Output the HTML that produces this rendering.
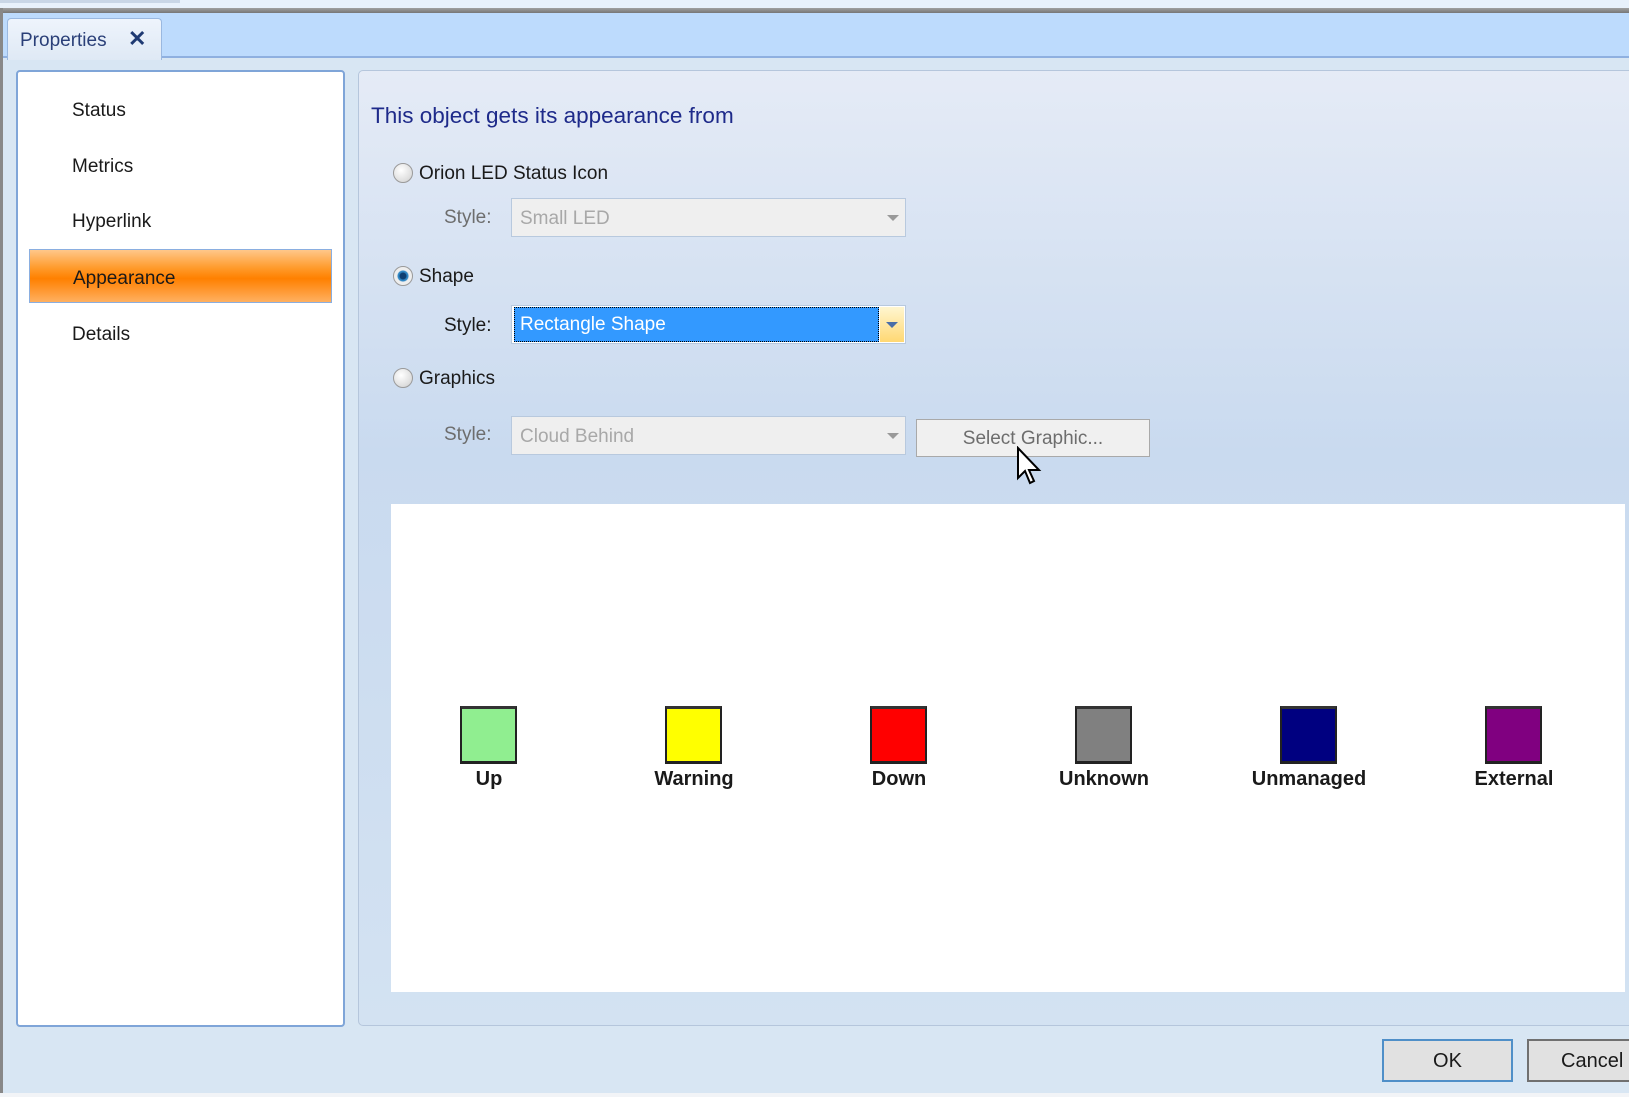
<!DOCTYPE html>
<html><head><meta charset="utf-8"><style>
*{margin:0;padding:0;box-sizing:border-box}
body{width:1629px;height:1097px;overflow:hidden;background:#d8e6f3;font-family:"Liberation Sans",sans-serif;position:relative;color:#1a1a1a}
.a{position:absolute}
.t{font-size:19px;white-space:nowrap;line-height:1}
.radio{width:20px;height:20px;border-radius:50%;border:1px solid #9a9a9a;background:radial-gradient(circle at 40% 35%,#fff,#ddd 70%,#bbb)}
.combo{border:1px solid #b8c9de;background:#efefef}
.combo .arr{position:absolute;right:6px;top:50%;margin-top:-3px;border-left:6px solid transparent;border-right:6px solid transparent;border-top:6px solid #999}
.sq{width:57px;height:58px;border:2px solid #222;border-top:3px solid #333;border-bottom:3px solid #222}
.lb{font-weight:bold;font-size:20px;width:160px;text-align:center;top:768px}
</style></head><body>
<div class="a" style="left:0;top:0;width:1629px;height:8px;background:#e8f1fb"></div>
<div class="a" style="left:0;top:0;width:180px;height:3px;background:#c9d6e6"></div>
<div class="a" style="left:0;top:8px;width:1629px;height:5px;background:linear-gradient(#a0a0a0,#777)"></div>
<div class="a" style="left:0;top:13px;width:1629px;height:45px;background:#bddbfd;border-bottom:2px solid #8fb0e0"></div>
<div class="a" style="left:0;top:8px;width:3px;height:1085px;background:#888"></div>
<div class="a" style="left:7px;top:18px;width:155px;height:42px;background:linear-gradient(#eef4fc,#dfe9f5);border:1px solid #9ab8e0;border-bottom:none;border-radius:4px 4px 0 0"></div>
<div class="a t" style="left:20px;top:31px;color:#2a3f78;font-size:19px">Properties</div>
<div class="a" style="left:128px;top:26px;font-size:22px;font-weight:bold;color:#1f3a73">✕</div>
<div class="a" style="left:16px;top:70px;width:329px;height:957px;background:#fff;border:2px solid #7fa5d8;border-radius:4px"></div>
<div class="a t" style="left:72px;top:101px">Status</div>
<div class="a t" style="left:72px;top:157px">Metrics</div>
<div class="a t" style="left:72px;top:212px">Hyperlink</div>
<div class="a" style="left:29px;top:249px;width:303px;height:54px;border:1px solid #8aaee0;background:linear-gradient(#ffc78a,#ff9a2a 35%,#ff8000 55%,#ffb060)"></div>
<div class="a t" style="left:73px;top:269px">Appearance</div>
<div class="a t" style="left:72px;top:325px">Details</div>
<div class="a" style="left:358px;top:70px;width:1280px;height:956px;border:1px solid #b5c6dc;border-radius:5px;background:linear-gradient(#e5ebf6,#c9daef 40%,#d3e2f2)"></div>
<div class="a t" style="left:371px;top:105px;font-size:22.5px;color:#1e2a8a">This object gets its appearance from</div>
<div class="a radio" style="left:393px;top:163px"></div>
<div class="a t" style="left:419px;top:164px">Orion LED Status Icon</div>
<div class="a t" style="left:444px;top:208px;color:#6d6d6d">Style:</div>
<div class="a combo" style="left:511px;top:198px;width:395px;height:39px"><span class="a t" style="left:8px;top:10px;color:#a8a8a8">Small LED</span><span class="arr"></span></div>
<div class="a radio" style="left:393px;top:266px;background:radial-gradient(circle,#0d3f72 0 3px,#2f86c4 4px 5px,#eee 6px)"></div>
<div class="a t" style="left:419px;top:267px">Shape</div>
<div class="a t" style="left:444px;top:316px">Style:</div>
<div class="a" style="left:511px;top:305px;width:395px;height:39px;border:1px solid #b8c9de;background:#fff"></div>
<div class="a" style="left:514px;top:307px;width:365px;height:35px;background:#3399ff;border:1px dotted #000"></div>
<div class="a t" style="left:520px;top:315px;color:#fff">Rectangle Shape</div>
<div class="a" style="left:880px;top:307px;width:24px;height:35px;background:linear-gradient(#fff6d0,#ffd873)"></div>
<div class="a" style="left:886px;top:322px;border-left:6px solid transparent;border-right:6px solid transparent;border-top:6px solid #4a6ea8"></div>
<div class="a radio" style="left:393px;top:368px"></div>
<div class="a t" style="left:419px;top:369px">Graphics</div>
<div class="a t" style="left:444px;top:425px;color:#6d6d6d">Style:</div>
<div class="a combo" style="left:511px;top:416px;width:395px;height:39px"><span class="a t" style="left:8px;top:10px;color:#a8a8a8">Cloud Behind</span><span class="arr"></span></div>
<div class="a" style="left:916px;top:419px;width:234px;height:38px;border:1px solid #a9a9a9;background:#f0f0f0"></div>
<div class="a t" style="left:916px;top:429px;width:234px;text-align:center;color:#6d6d6d">Select Graphic...</div>
<svg class="a" style="left:1016px;top:446px" width="26" height="40" viewBox="0 0 13 20"><path d="M1 1v15l3.5-3.5 2.5 6 2-1-2.5-5.5h5z" fill="#fff" stroke="#000" stroke-width="1"/></svg>
<div class="a" style="left:391px;top:504px;width:1234px;height:488px;background:#fff"></div>
<div class="a sq" style="left:460px;top:706px;background:#90ee90"></div>
<div class="a sq" style="left:665px;top:706px;background:#ffff00"></div>
<div class="a sq" style="left:870px;top:706px;background:#ff0000"></div>
<div class="a sq" style="left:1075px;top:706px;background:#808080"></div>
<div class="a sq" style="left:1280px;top:706px;background:#000080"></div>
<div class="a sq" style="left:1485px;top:706px;background:#800080"></div>
<div class="a lb" style="left:409px">Up</div>
<div class="a lb" style="left:614px">Warning</div>
<div class="a lb" style="left:819px">Down</div>
<div class="a lb" style="left:1024px">Unknown</div>
<div class="a lb" style="left:1229px">Unmanaged</div>
<div class="a lb" style="left:1434px">External</div>
<div class="a" style="left:1382px;top:1039px;width:131px;height:43px;border:2px solid #4f8fc8;background:#e1e1e1"></div>
<div class="a t" style="left:1382px;top:1051px;width:131px;text-align:center;font-size:20px">OK</div>
<div class="a" style="left:1527px;top:1039px;width:110px;height:43px;border:2px solid #707070;background:#e1e1e1"></div>
<div class="a t" style="left:1561px;top:1051px;font-size:20px">Cancel</div>
<div class="a" style="left:0;top:1093px;width:1629px;height:4px;background:#f2f4f7"></div>
</body></html>
